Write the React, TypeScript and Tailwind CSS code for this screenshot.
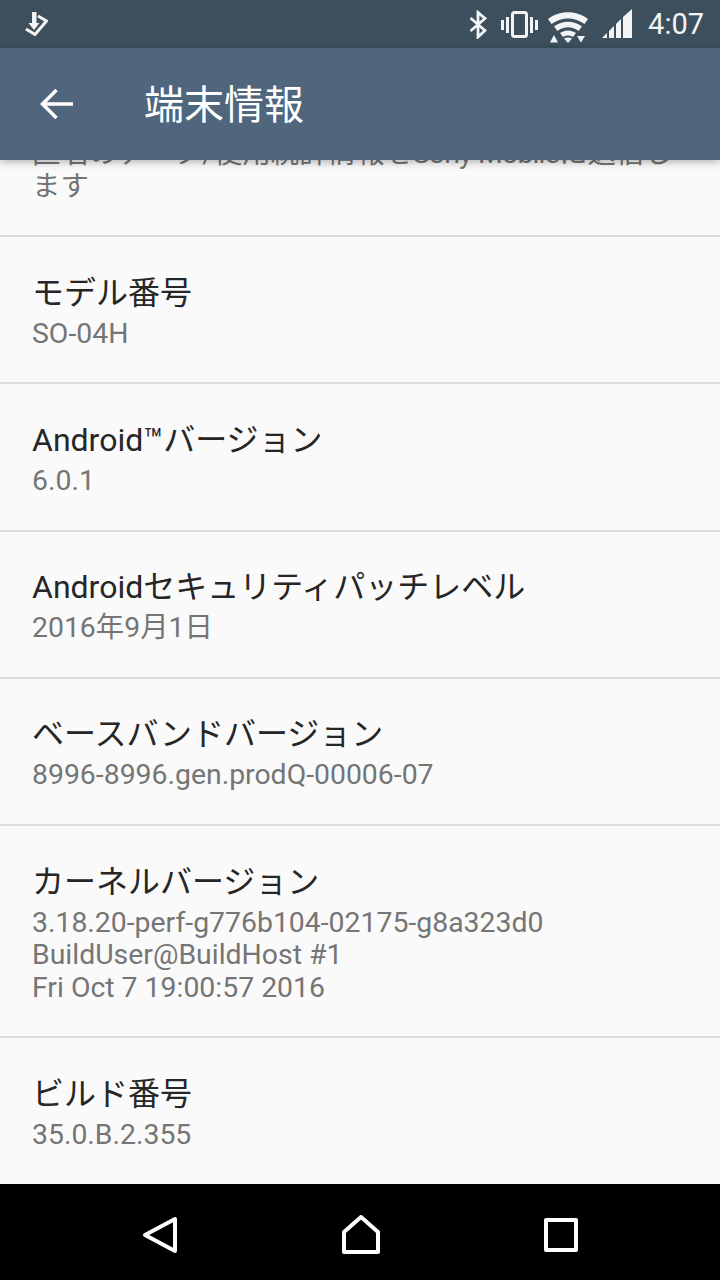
const FONT = "font-['Roboto','Noto_Sans_CJK_JP',sans-serif]";

const ITEMS = [
  { title: 'モデル番号', lines: ['SO-04H'] },
  { title: 'Android™バージョン', lines: ['6.0.1'] },
  { title: 'Androidセキュリティパッチレベル', lines: ['2016年9月1日'] },
  { title: 'ベースバンドバージョン', lines: ['8996-8996.gen.prodQ-00006-07'] },
  {
    title: 'カーネルバージョン',
    lines: ['3.18.20-perf-g776b104-02175-g8a323d0', 'BuildUser@BuildHost #1', 'Fri Oct 7 19:00:57 2016'],
  },
  { title: 'ビルド番号', lines: ['35.0.B.2.355'] },
];

function StatusBar() {
  return (
    <div className="flex h-12 shrink-0 items-center bg-[#3d4f5d] pl-[24px] pr-[16px]">
      {/* ダウンロード通知 */}
      <svg width="24" height="26" viewBox="0 0 24 26" fill="none">
        <path d="M2 18 L11 23.500 L22.500 10 L14 5" stroke="#f2f4f5" strokeWidth="3" strokeLinejoin="round" />
        <path d="M8 1 H12.500 V12 H15.500 L10 19 L4.500 12 H8 Z" fill="#f2f4f5" />
      </svg>
      <div className="ml-auto flex items-center">
        {/* Bluetooth */}
        <svg width="18" height="29" viewBox="0 0 18 29" fill="none" stroke="#f2f4f5" strokeWidth="2.800">
          <path d="M1.500 8 L16 20.500 L9 27 V2.500 L16 8.500 L1.500 21" />
        </svg>
        {/* バイブ */}
        <svg width="37" height="27" viewBox="0 0 37 27" className="ml-[14px]" fill="#f2f4f5">
          <rect x="0" y="9" width="3" height="10" />
          <rect x="5" y="6" width="3" height="16" />
          <rect x="29" y="6" width="3" height="16" />
          <rect x="34" y="9" width="3" height="10" />
          <rect x="11.500" y="1.500" width="14" height="24" rx="2" fill="none" stroke="#f2f4f5" strokeWidth="3" />
        </svg>
        {/* Wi-Fi */}
        <svg width="40" height="31" viewBox="0 0 40 31" className="ml-[10px] mt-[6px]" fill="#f2f4f5">
          <path d="M0 7 C11 -2 29 -2 40 7 L36.500 12 C27 4.500 13 4.500 3.500 12 Z" />
          <path d="M6 14.500 C14 8 26 8 34 14.500 L30.500 19 C24 14 16 14 9.500 19 Z" />
          <path d="M12 21 C17 17.500 23 17.500 28 21 L25 25 C22 23 18 23 15 25 Z" />
          <path d="M16 26.500 C18.500 25 21.500 25 24 26.500 L20 31 Z" />
          <path d="M2 30.500 L6 23 L10 30.500 Z" />
          <path d="M29 24 H37 L33 30.500 Z" />
        </svg>
        {/* 電波 */}
        <svg width="30" height="30" viewBox="0 0 30 30" className="ml-[14px]" fill="#f2f4f5">
          <path d="M0 29 L5 24 V29 Z" />
          <path d="M7 22 L12 17 V29 H7 Z" />
          <path d="M14 15 L19 10 V29 H14 Z" />
          <path d="M21 8 L30 0 V29 H21 Z" />
        </svg>
        <span className="ml-[16px] text-[29px] leading-none text-[#f2f4f5]">4:07</span>
      </div>
    </div>
  );
}

function AppBar() {
  return (
    <div className="relative z-10 flex h-[112px] shrink-0 items-center bg-[#4f667c] pl-[40px] shadow-[0_2px_8px_rgba(0,0,0,0.3)]">
      <svg width="33" height="32" viewBox="0 0 33 32" fill="none" stroke="#fff" strokeWidth="3.500">
        <path d="M33 16 H3 M16.500 2 L2.500 16 L16.500 30" />
      </svg>
      <h1 className="ml-[71px] pt-[4px] text-[40px] leading-none text-white">端末情報</h1>
    </div>
  );
}

function NavBar() {
  return (
    <div className="flex h-24 shrink-0 items-center justify-between bg-black pl-[142px] pr-[142px] pt-[5px]">
      <svg width="36" height="38" viewBox="0 0 36 38" fill="none" stroke="#fff" strokeWidth="4" strokeLinejoin="round">
        <path d="M33 3 V35 L3 19 Z" />
      </svg>
      <svg width="38" height="40" viewBox="0 0 38 40" fill="none" stroke="#fff" strokeWidth="4" strokeLinejoin="round">
        <path d="M2 17 L19 2 L36 17 V37 H2 Z" />
      </svg>
      <svg width="34" height="34" viewBox="0 0 34 34" fill="none" stroke="#fff" strokeWidth="4" strokeLinejoin="round">
        <rect x="2" y="2" width="30" height="30" />
      </svg>
    </div>
  );
}

export default function App() {
  return (
    <div className={`flex h-[1280px] w-[720px] flex-col overflow-hidden bg-[#fafafa] ${FONT}`}>
      <StatusBar />
      <AppBar />
      <div className="flex-1 overflow-hidden">
        {/* スクロールで上が隠れている項目 */}
        <div className="-mt-[23px] h-[100px] border-b-2 border-[#dcdcdc] pl-[32px] pr-[32px] text-[28.4px] leading-[33px] text-[#757575]">
          <p className="whitespace-nowrap">
            匿名のデータ/使用統計情報を<span className="tracking-[-0.8px]">Sony Mobile</span>に送信し
          </p>
          <p>ます</p>
        </div>
        {ITEMS.map((item) => (
          <div key={item.title} className="border-b-2 border-[#dcdcdc] px-[32px] pb-[32.25px] pt-[30.5px] last:border-b-0">
            <p className="text-[32px] leading-[50px] text-[#262626]">{item.title}</p>
            {item.lines.map((line) => (
              <p key={line} className="text-[28.4px] leading-[32.5px] text-[#757575]">{line}</p>
            ))}
          </div>
        ))}
      </div>
      <NavBar />
    </div>
  );
}
